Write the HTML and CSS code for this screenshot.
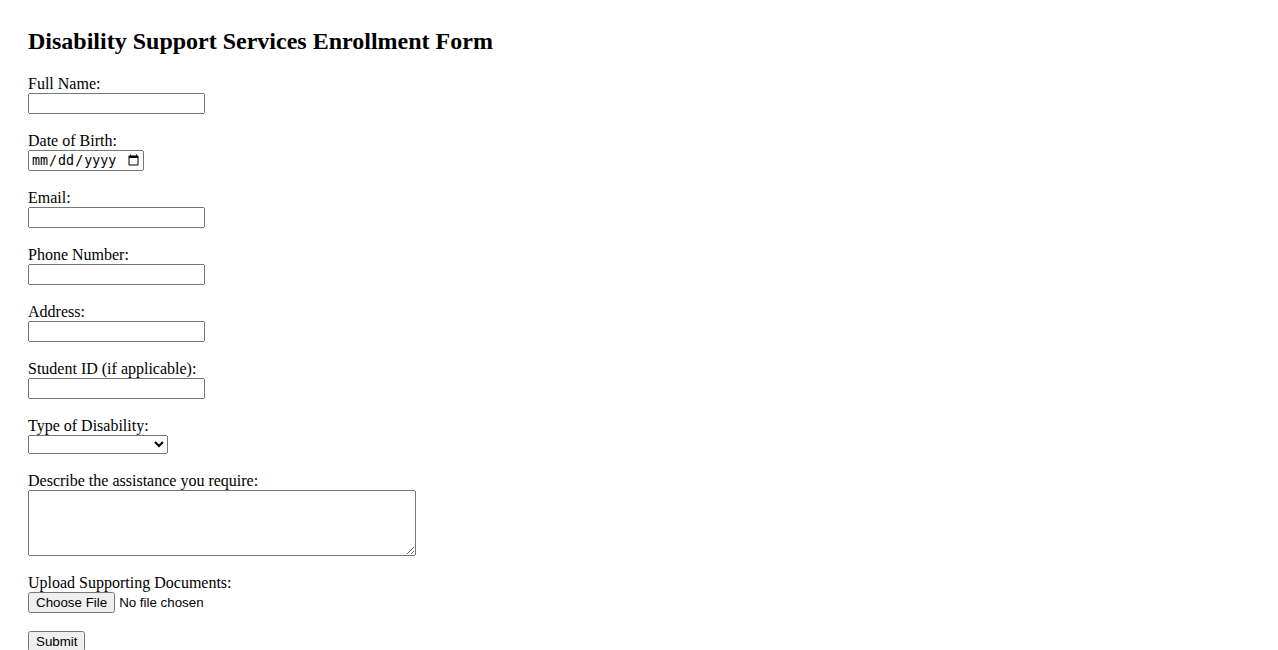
FILE: index.html
```html
<!DOCTYPE html>
<html>
<head>
<meta charset="utf-8">
<title>Disability Support Services Enrollment Form</title>
<link rel="stylesheet" href="styles.css">
</head>
<body>
<h2 class="title">Disability Support Services Enrollment Form</h2>
<form class="form">
  <div class="group"><label class="label" for="name">Full Name:</label><input id="name" class="field" type="text"></div>
  <div class="group"><label class="label" for="dob">Date of Birth:</label><input id="dob" class="date" type="date"></div>
  <div class="group"><label class="label" for="email">Email:</label><input id="email" class="field" type="email"></div>
  <div class="group"><label class="label" for="phone">Phone Number:</label><input id="phone" class="field" type="tel"></div>
  <div class="group"><label class="label" for="addr">Address:</label><input id="addr" class="field" type="text"></div>
  <div class="group"><label class="label" for="sid">Student ID (if applicable):</label><input id="sid" class="field" type="text"></div>
  <div class="group"><label class="label" for="type">Type of Disability:</label><select id="type" class="select"><option></option></select></div>
  <div class="group"><label class="label" for="desc">Describe the assistance you require:</label><textarea id="desc" class="area" rows="4" cols="50"></textarea></div>
  <div class="group"><label class="label" for="docs">Upload Supporting Documents:</label><input id="docs" class="file" type="file"></div>
  <div class="group"><button type="submit" class="submit">Submit</button></div>
</form>
</body>
</html>
```
FILE: styles.css
```css
body {
  margin: 8px;
  padding: 20px;
  font-family: "Liberation Serif", "Times New Roman", serif;
  font-size: 16px;
}
.title {
  margin: 0 0 20px 0;
  font-size: 24px;
}
.group {
  margin-bottom: 18px;
}
.label {
  display: block;
}
.field {
  box-sizing: border-box;
  width: 177px;
  height: 21px;
}
.date {
  box-sizing: border-box;
  width: 116px;
  height: 21px;
}
.select {
  box-sizing: border-box;
  width: 140px;
  height: 19px;
}
.area {
  box-sizing: border-box;
  width: 388px;
  height: 66px;
  display: block;
}
.file {
  height: 21px;
}
.submit {
  height: 21px;
}
```
